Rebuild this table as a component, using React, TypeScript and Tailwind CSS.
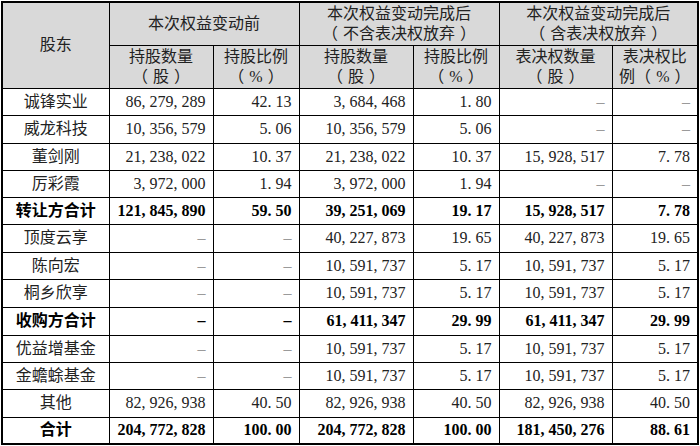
import React from 'react';

type Row = {
  name: string;
  bold?: boolean;
  h: string;
  cells: string[];
};

const rows: Row[] = [
  { name: '诚锋实业', h: 'h-[27px]', cells: ['86,279,289', '42.13', '3,684,468', '1.80', '-', '-'] },
  { name: '威龙科技', h: 'h-[28px]', cells: ['10,356,579', '5.06', '10,356,579', '5.06', '-', '-'] },
  { name: '董剑刚', h: 'h-[27px]', cells: ['21,238,022', '10.37', '21,238,022', '10.37', '15,928,517', '7.78'] },
  { name: '厉彩霞', h: 'h-[27px]', cells: ['3,972,000', '1.94', '3,972,000', '1.94', '-', '-'] },
  { name: '转让方合计', bold: true, h: 'h-[27px]', cells: ['121,845,890', '59.50', '39,251,069', '19.17', '15,928,517', '7.78'] },
  { name: '顶度云享', h: 'h-[28px]', cells: ['-', '-', '40,227,873', '19.65', '40,227,873', '19.65'] },
  { name: '陈向宏', h: 'h-[27px]', cells: ['-', '-', '10,591,737', '5.17', '10,591,737', '5.17'] },
  { name: '桐乡欣享', h: 'h-[28px]', cells: ['-', '-', '10,591,737', '5.17', '10,591,737', '5.17'] },
  { name: '收购方合计', bold: true, h: 'h-[28px]', cells: ['-', '-', '61,411,347', '29.99', '61,411,347', '29.99'] },
  { name: '优益增基金', h: 'h-[27px]', cells: ['-', '-', '10,591,737', '5.17', '10,591,737', '5.17'] },
  { name: '金蟾蜍基金', h: 'h-[27px]', cells: ['-', '-', '10,591,737', '5.17', '10,591,737', '5.17'] },
  { name: '其他', h: 'h-[28px]', cells: ['82,926,938', '40.50', '82,926,938', '40.50', '82,926,938', '40.50'] },
  { name: '合计', bold: true, h: 'h-[27px]', cells: ['204,772,828', '100.00', '204,772,828', '100.00', '181,450,276', '88.61'] },
];

// SimSun-style half-width punctuation: comma and point take a full digit width
const Num: React.FC<{ value: string; bold?: boolean }> = ({ value, bold }) => {
  if (value === '-') {
    return <span className={bold ? 'text-black' : 'text-[#9a9a9a]'}>–</span>;
  }
  return (
    <>
      {value.split('').map((ch, i) =>
        ch === ',' || ch === '.' ? (
          <span key={i} className="inline-block w-[0.5em] text-left">
            {ch}
          </span>
        ) : (
          <span key={i}>{ch}</span>
        )
      )}
    </>
  );
};

// full-width brackets; the CJK face hugs the content, the source leaves air inside
const Paren: React.FC<{ children: React.ReactNode }> = ({ children }) => (
  <>
    <span className="mr-[5px]">（</span>
    {children}
    <span className="ml-[5px]">）</span>
  </>
);

const App: React.FC = () => {
  const head = 'border border-black bg-[#d9d9d9] text-center align-middle leading-[20px] font-normal';

  return (
    <div className="bg-white w-[700px] h-[446px] p-px font-['Liberation_Serif','Noto_Sans_CJK_SC',serif] text-[16px] text-[#222] [text-spacing-trim:space-all]">
      <table className="table-fixed border-collapse border-2 border-black w-[696px]">
        <colgroup>
          <col className="w-[107px]" />
          <col className="w-[104px]" />
          <col className="w-[86px]" />
          <col className="w-[114px]" />
          <col className="w-[86px]" />
          <col className="w-[113px]" />
          <col className="w-[86px]" />
        </colgroup>
        <thead>
          <tr className="h-[43px]">
            <th rowSpan={2} className={head}>股东</th>
            <th colSpan={2} className={head}>本次权益变动前</th>
            <th colSpan={2} className={head}>
              本次权益变动完成后
              <br />
              <Paren>不含表决权放弃</Paren>
            </th>
            <th colSpan={2} className={head}>
              本次权益变动完成后
              <br />
              <Paren>含表决权放弃</Paren>
            </th>
          </tr>
          <tr className="h-[43px]">
            <th className={head}>持股数量<br /><Paren>股</Paren></th>
            <th className={head}>持股比例<br /><Paren>%</Paren></th>
            <th className={head}>持股数量<br /><Paren>股</Paren></th>
            <th className={head}>持股比例<br /><Paren>%</Paren></th>
            <th className={head}>表决权数量<br /><Paren>股</Paren></th>
            <th className={head}>表决权比<br />例<Paren>%</Paren></th>
          </tr>
        </thead>
        <tbody>
          {rows.map((r) => (
            <tr key={r.name} className={`${r.h} ${r.bold ? 'font-bold text-black' : ''}`}>
              <td className="border border-black text-center align-middle p-0 leading-none">{r.name}</td>
              {r.cells.map((c, i) => (
                <td key={i} className="border border-black text-right align-middle pr-[7px] py-0 leading-none whitespace-nowrap">
                  <Num value={c} bold={r.bold} />
                </td>
              ))}
            </tr>
          ))}
        </tbody>
      </table>
    </div>
  );
};

export default App;
